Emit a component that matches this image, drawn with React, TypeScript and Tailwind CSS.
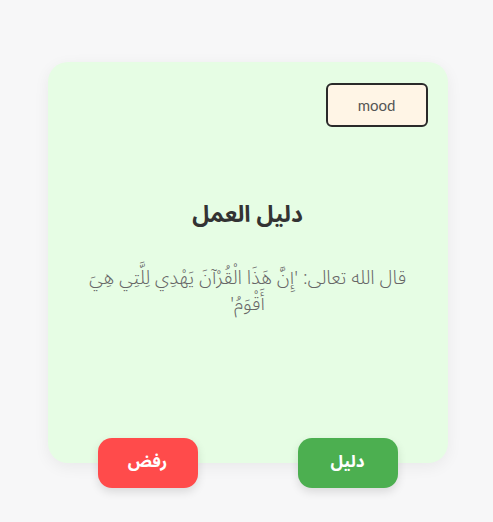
export default function App() {
  return (
    <div
      dir="rtl"
      className="min-h-screen bg-[#f7f7f8] flex items-center justify-center pt-[3px]"
      style={{ fontFamily: '"Noto Sans Arabic", "Noto Sans", "DejaVu Sans", sans-serif' }}
    >
      <div className="relative ml-[2px] w-[400px] h-[401px] bg-[#e6fde4] rounded-[20px] shadow-[0_4px_16px_rgba(0,0,0,0.06)] flex flex-col items-center px-5">
        <div className="self-stretch flex justify-end pt-[21px]" dir="ltr">
          <div className="w-[102px] h-[44px] bg-[#fff5e6] border-2 border-[#2a2a2a] rounded-[6px] flex items-center justify-center text-[15px] text-[#555] font-['Lato',sans-serif]">
            mood
          </div>
        </div>
        <h1 className="mt-[73px] text-[23px] font-bold text-[#333] leading-[30px]">دليل العمل</h1>
        <p className="mt-[35px] w-[330px] text-[19px] font-light text-[#666] leading-[26px] text-center">
          قال الله تعالى: 'إِنَّ هَذَا الْقُرْآنَ يَهْدِي لِلَّتِي هِيَ أَقْوَمُ'
        </p>
        <div className="absolute left-0 right-0 -bottom-[25px] flex justify-around" dir="ltr">
          <button className="w-[100px] h-[50px] rounded-[14px] bg-[#ff4b4b] text-white font-bold text-[17px] shadow-[0_4px_10px_rgba(0,0,0,0.12)]">
            رفض
          </button>
          <button className="w-[100px] h-[50px] rounded-[14px] bg-[#4caf50] text-white font-bold text-[17px] shadow-[0_4px_10px_rgba(0,0,0,0.12)]">
            دليل
          </button>
        </div>
      </div>
    </div>
  );
}
